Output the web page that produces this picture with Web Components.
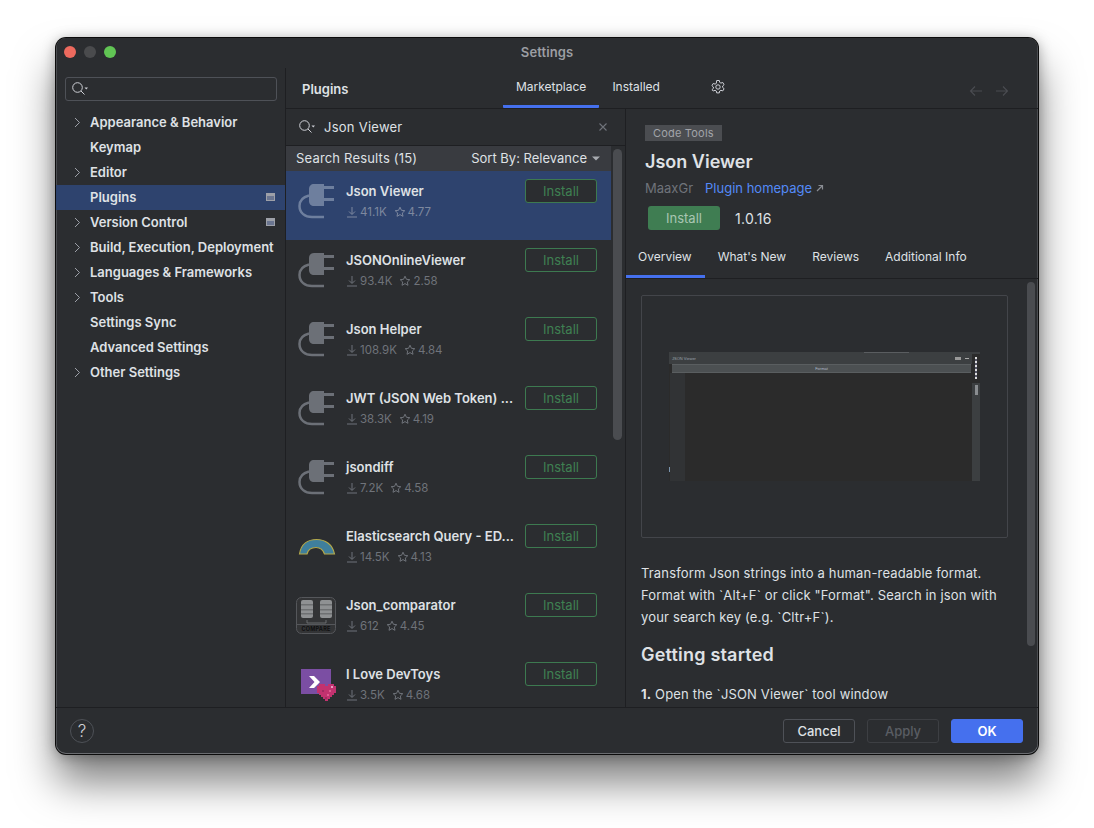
<!DOCTYPE html>
<html lang="en"><head><meta charset="utf-8"><title>Settings</title>
<style>
html,body{margin:0;background:#fff;height:828px;overflow:hidden}
body{font-family:Inter,"Liberation Sans",sans-serif;font-size:13px;color:#dfe1e5}
</style></head><body>
<settings-window>
  <side-nav slot="side">
    <nav-item arrow>Appearance &amp; Behavior</nav-item>
    <nav-item>Keymap</nav-item>
    <nav-item arrow>Editor</nav-item>
    <nav-item selected badge>Plugins</nav-item>
    <nav-item arrow badge>Version Control</nav-item>
    <nav-item arrow>Build, Execution, Deployment</nav-item>
    <nav-item arrow>Languages &amp; Frameworks</nav-item>
    <nav-item arrow>Tools</nav-item>
    <nav-item>Settings Sync</nav-item>
    <nav-item>Advanced Settings</nav-item>
    <nav-item arrow>Other Settings</nav-item>
  </side-nav>
  <plugins-header slot="header"></plugins-header>
  <plugin-list slot="list">
    <plugin-row selected name="Json Viewer" dl="41.1K" rate="4.77"><plug-icon slot="icon" tone="sel"></plug-icon></plugin-row>
    <plugin-row name="JSONOnlineViewer" dl="93.4K" rate="2.58"><plug-icon slot="icon"></plug-icon></plugin-row>
    <plugin-row name="Json Helper" dl="108.9K" rate="4.84"><plug-icon slot="icon"></plug-icon></plugin-row>
    <plugin-row name="JWT (JSON Web Token) ..." dl="38.3K" rate="4.19"><plug-icon slot="icon"></plug-icon></plugin-row>
    <plugin-row name="jsondiff" dl="7.2K" rate="4.58"><plug-icon slot="icon"></plug-icon></plugin-row>
    <plugin-row name="Elasticsearch Query - ED..." dl="14.5K" rate="4.13">
      <svg slot="icon" width="36" height="36" viewBox="0 0 36 36" style="display:block;overflow:visible"><path d="M1.500 26C3 16 10 11.500 18.500 11.500C27 11.500 34.500 16 36.500 26L26.500 26C25 21.500 22 19.500 18 19.500C14 19.500 10 21.500 9 26Z" fill="#3f7f9c" stroke="#b5a94a" stroke-width="1.200"/></svg>
    </plugin-row>
    <plugin-row name="Json_comparator" dl="612" rate="4.45">
      <svg slot="icon" width="36" height="36" viewBox="0 0 36 36" style="display:block;overflow:visible">
        <rect x="-1.500" y=".5" width="39" height="36" rx="5" fill="#333436" stroke="#55575b"/>
        <g fill="#8f9193"><rect x="3" y="3" width="12" height="18" rx="2"/><rect x="22" y="3" width="12" height="18" rx="2"/></g>
        <g fill="#6e7072"><rect x="3" y="7" width="12" height="1.500"/><rect x="3" y="12" width="12" height="1.500"/><rect x="3" y="16" width="12" height="1.500"/><rect x="22" y="7" width="12" height="1.500"/><rect x="22" y="12" width="12" height="1.500"/><rect x="22" y="16" width="12" height="1.500"/></g>
        <path d="M9 23V26H28V23" fill="none" stroke="#77797b" stroke-width=".8"/>
        <path d="M-1.500 27.500H37.500" stroke="#55575b"/>
        <text x="18" y="34" font-family="Inter,sans-serif" font-size="5.500" font-weight="700" fill="#0f0f10" text-anchor="middle" letter-spacing=".2">COMPARE</text>
      </svg>
    </plugin-row>
    <plugin-row name="I Love DevToys" dl="3.5K" rate="4.68">
      <svg slot="icon" width="40" height="36" viewBox="0 0 40 36" style="display:block;overflow:visible" shape-rendering="crispEdges">
        <rect x="3" y="3" width="30" height="25" fill="#7b4ea3"/>
        <path d="M11 10L16 10L22 16L16 22L11 22L16.500 16Z" fill="#fff" shape-rendering="auto"/>
        <path d="M21 18H27V20H30V18H36V20H38V27H36V29H34V31H32V33H30V35H27V33H25V31H23V29H21V27H19V20H21Z" fill="#c2326f"/>
        <rect x="33" y="20" width="2" height="2" fill="#e8a0c0"/><rect x="24" y="24" width="2" height="2" fill="#a02a60"/><rect x="29" y="28" width="2" height="2" fill="#e05a90"/><rect x="31" y="24" width="2" height="2" fill="#e05a90"/><rect x="27" y="31" width="2" height="2" fill="#a02a60"/>
      </svg>
    </plugin-row>
  </plugin-list>
  <plugin-detail slot="detail"></plugin-detail>
</settings-window>

<script>
function comp(tag, css, html, extra){
  class C extends HTMLElement{
    constructor(){super();const r=this.attachShadow({mode:'open'});r.innerHTML='<style>'+css+'</style>'+(typeof html==='function'?html(this):html);}
    connectedCallback(){
      if(extra)extra(this);
    }
  }
  customElements.define(tag,C);
}
const searchSvg=`<svg width="18" height="16" viewBox="0 0 18 16" style="display:block"><circle cx="6.500" cy="6.500" r="4.800" fill="none" stroke="#ced0d6" stroke-width="1"/><path d="M10 10L13.500 13.500" stroke="#ced0d6" stroke-width="1"/><path d="M13.500 6.500H17L15.250 8.500Z" fill="#ced0d6"/></svg>`;

comp('settings-window',`
:host{display:flex;flex-direction:column;box-sizing:border-box;width:982px;height:716px;margin:38px 56px;background:#2b2d30;border-radius:10px;box-shadow:inset 0 -.5px 0 .5px #6a6c70,0 0 0 1px #0c0c0c,0 28px 42px rgba(0,0,0,.5),0 2px 14px rgba(0,0,0,.35);overflow:hidden}
.title{height:30px;box-sizing:border-box;flex:none;display:grid;grid-template-columns:1fr auto 1fr;align-items:center;padding:0 8px 3px}
.lights{display:flex;gap:8px}
.lights i{width:12px;height:12px;border-radius:50%}
.t{font-weight:600;font-size:13px;color:#9c9ea3;letter-spacing:.1px}
.body{flex:1;display:flex;min-height:0}
.side{width:229px;flex:none;border-right:1px solid #1e1f22}
.main{flex:1;display:flex;flex-direction:column;min-width:0}
.cols{flex:1;display:flex;min-height:0;border-top:1px solid #1e1f22}
.left{width:339px;flex:none;border-right:1px solid #1e1f22;min-height:0;display:flex}
.right{flex:1;min-width:0;display:flex}
.foot{height:47px;box-sizing:border-box;flex:none;border-top:1px solid #1e1f22;display:flex;align-items:flex-start;padding:11px 15px 0 14px;gap:12px}
.help{box-sizing:border-box;width:24px;height:24px;border:1px solid #4e5157;border-radius:50%;display:flex;align-items:center;justify-content:center;font-size:17px;color:#ced0d6;margin-right:auto;font-weight:300}
`,`
<div class="title"><div class="lights"><i style="background:#ed6a5e"></i><i style="background:#4a4b4d"></i><i style="background:#61c554"></i></div><div class="t">Settings</div><div></div></div>
<div class="body">
  <div class="side"><slot name="side"></slot></div>
  <div class="main">
    <slot name="header"></slot>
    <div class="cols"><div class="left"><slot name="list"></slot></div><div class="right"><slot name="detail"></slot></div></div>
  </div>
</div>
<div class="foot"><div class="help">?</div><dlg-button>Cancel</dlg-button><dlg-button disabled>Apply</dlg-button><dlg-button primary>OK</dlg-button></div>
`);

comp('dlg-button',`
:host{display:flex;align-items:center;justify-content:center;box-sizing:border-box;width:72px;height:24px;border:1px solid #4e5157;border-radius:3px;font-size:13px;font-weight:500;color:#dfe1e5}
:host([disabled]){color:#5a5d63;border-color:#3d3f43}
:host([primary]){background:#4570ee;border-color:#4570ee;color:#fff;font-weight:600}
`,`<slot></slot>`);

comp('side-nav',`
:host{display:block}
.s{box-sizing:border-box;margin:9px 8px 9px 9px;height:24px;border:1px solid #4e5157;border-radius:3px;display:flex;align-items:center;padding-left:5px}
`,`<div class="s">${searchSvg}</div><slot></slot>`);

comp('nav-item',`
:host{display:flex;align-items:center;box-sizing:border-box;height:25px;padding:0 0 1px 34px;position:relative;font-weight:600;font-size:13px;color:#dfe1e5;white-space:nowrap}
:host([selected]){background:#2e436e}
.a{position:absolute;left:17px;top:7px;display:none}
:host([arrow]) .a{display:block}
.b{position:absolute;right:10px;top:8px;display:none}
:host([badge]) .b{display:block}
`,`<svg class="a" width="8" height="11" viewBox="0 0 8 11"><path d="M2 1L6.500 5.500L2 10" fill="none" stroke="#9da0a8" stroke-width="1"/></svg><slot></slot><svg class="b" width="9" height="8" viewBox="0 0 9 8"><rect x=".5" y=".5" width="8" height="7" fill="#6a7590" stroke="#9da0a8"/><rect x="1" y="1" width="7" height="2" fill="#9da0a8"/></svg>`);

comp('plugins-header',`
:host{display:flex;height:40px;flex:none;align-items:stretch;position:relative;color:#dfe1e5}
.h{width:217px;flex:none;padding:12px 0 0 16px;box-sizing:border-box;font-weight:600;font-size:13px;line-height:18px}
.tab{padding:10px 13px 0;font-size:12px;font-weight:400;line-height:18px;box-sizing:border-box;height:40px}
.tab.on{border-bottom:3px solid #4570ee;border-radius:0 0 1px 1px}
.gear{margin:11px 0 0 37px;width:16px;height:16px}
.nav{margin-left:auto;padding:17px 29px 0 0;display:flex;gap:12px}
`,`<div class="h">Plugins</div><div class="tab on">Marketplace</div><div class="tab">Installed</div>
<svg class="gear" viewBox="0 0 16 16" fill="none" stroke="#ced0d6" stroke-width="1"><circle cx="8" cy="8" r="2.200"/><path d="M6.700 1.500h2.600l.4 1.900 1.200.7 1.900-.6 1.300 2.200-1.500 1.300v1.400l1.500 1.300-1.300 2.200-1.900-.6-1.200.7-.4 1.900H6.700l-.4-1.900-1.200-.7-1.900.6L1.900 10.700l1.500-1.300V8l-1.500-1.300 1.300-2.200 1.900.6 1.200-.7z"/></svg>
<div class="nav"><svg width="14" height="12" viewBox="0 0 14 12" fill="none" stroke="#4a4c51" stroke-width="1.100"><path d="M13 6H1.500M6 1.500L1.500 6L6 10.500"/></svg><svg width="14" height="12" viewBox="0 0 14 12" fill="none" stroke="#4a4c51" stroke-width="1.100"><path d="M1 6H12.500M8 1.500L12.500 6L8 10.500"/></svg></div>`);

comp('plugin-list',`
:host{display:flex;flex-direction:column;width:100%;position:relative;min-height:0;overflow:hidden}
.s{height:37px;box-sizing:border-box;flex:none;border-bottom:1px solid #1e1f22;display:flex;align-items:center;padding:0 17px 1px 12px;color:#dfe1e5;font-size:13px;font-weight:400}
.s span{margin-left:8px;flex:1;letter-spacing:.25px}
.bar{width:325px;box-sizing:border-box;height:25px;flex:none;background:#393b40;display:flex;align-items:center;justify-content:space-between;padding:0 11px 1px 10px;color:#dfe1e5;font-size:13px}
.bar>span:first-child{letter-spacing:.18px}
.sort{display:flex;align-items:center;gap:5px}
.rows{flex:1;min-height:0;overflow:hidden;width:325px}
.thumb{position:absolute;left:327px;top:40px;width:9px;height:291px;border-radius:5px;background:#4a4c50}
`,`<div class="s">${searchSvg}<span>Json Viewer</span><svg width="10" height="10" viewBox="0 0 10 10"><path d="M1.500 1.500L8.500 8.500M8.500 1.500L1.500 8.500" stroke="#6f737a" stroke-width="1.100"/></svg></div>
<div class="bar"><span>Search Results (15)</span><span class="sort">Sort By: Relevance<svg width="8" height="5" viewBox="0 0 8 5"><path d="M0 .5H8L4 4.500Z" fill="#a8abb0"/></svg></span></div>
<div class="rows"><slot></slot></div><div class="thumb"></div>`);

const dlIcon=`<svg width="12" height="12" viewBox="0 0 12 12" fill="none" stroke="currentColor" stroke-width="1"><path d="M6 1V8M3 5.500L6 8.500L9 5.500M1 11H11"/></svg>`;
const starIcon=`<svg width="12" height="12" viewBox="0 0 12 12" fill="none" stroke="currentColor" stroke-width="1"><path d="M6 1.200L7.450 4.300L10.800 4.700L8.300 7L9 10.300L6 8.600L3 10.300L3.700 7L1.200 4.700L4.550 4.300Z"/></svg>`;

comp('plugin-row',`
:host{display:flex;height:69px;box-sizing:border-box;padding:8px 14px 0 12px;gap:12px}
:host([selected]){background:#2e436e}
.ic{width:36px;height:36px;flex:none;margin-top:4px}
.tx{flex:1;min-width:0;padding-top:3px}
.n{font-weight:600;font-size:13px;line-height:18px;color:#dfe1e5;white-space:nowrap}
.st{display:flex;align-items:center;height:16px;margin-top:4px;color:#6f737a;font-size:11.500px;line-height:16px}
:host([selected]) .st{color:#7d889f}
.st b{font-weight:400;margin:0 7px 0 2px}
.st b:last-child{margin-right:0}
.ins{width:72px;height:24px;flex:none;box-sizing:border-box;border:1px solid #3d7a50;border-radius:3px;display:flex;align-items:center;justify-content:center;color:#3f8052;font-size:13px}
:host([selected]) .ins{background:#2b2d30}
`,(h)=>`<div class="ic"><slot name="icon"></slot></div><div class="tx"><div class="n"></div><div class="st">${dlIcon}<b class="d"></b>${starIcon}<b class="r"></b></div></div><div class="ins">Install</div>`,
(h)=>{const r=h.shadowRoot;r.querySelector('.n').textContent=h.getAttribute('name');r.querySelector('.d').textContent=h.getAttribute('dl');r.querySelector('.r').textContent=h.getAttribute('rate');});

comp('plug-icon',`
:host{display:block;width:36px;height:36px;color:#6c7077}
:host([tone=sel]){color:#6e7f9e}
svg{display:block}
`,`<svg width="36" height="36" viewBox="0 0 36 36"><path d="M26 1V23H16C13 23 11 21 11 18V6C11 3 13 1 16 1Z" fill="currentColor"/><path d="M26 3H36V6H26ZM26 15H36V18H26Z" fill="currentColor"/><path d="M11 12.500C5 14 1.500 18 1.500 23C1.500 30 7 34 14 34H26" fill="none" stroke="currentColor" stroke-width="2.500"/></svg>`);

comp('plugin-detail',`
:host{display:flex;flex-direction:column;width:100%;position:relative;min-height:0;overflow:hidden;color:#dfe1e5}
.head{flex:none;padding:16px 0 0 19px}
.badge{display:inline-block;height:16px;line-height:16px;padding:0 8px;background:#4b4d51;color:#a2a4a9;font-size:11px;letter-spacing:.2px;vertical-align:top}
h1{margin:9px 0 0;font-size:18px;font-weight:600;line-height:24px;color:#dfe1e5}
.by{display:flex;align-items:center;height:18px;margin-top:5px;font-size:13px;color:#6f737a}
.by a{color:#548af7;margin-left:12px}
.by svg{margin-left:4px}
.act{display:flex;align-items:center;margin:9px 0 0 3px;height:24px}
.inst{width:72px;height:24px;background:#3f7d52;color:#a9c6b2;border-radius:3px;display:flex;align-items:center;justify-content:center;font-size:13px}
.ver{margin-left:15px;font-size:14px;letter-spacing:.3px}
.tabs{flex:none;display:flex;height:41px;box-sizing:border-box;border-bottom:1px solid #1e1f22;margin-top:8px;font-size:12px;font-weight:400}
.tabs div{padding:10px 13px 0;line-height:18px;box-sizing:border-box}
.tabs .on{border-bottom:3px solid #4570ee;height:40px;padding-left:12px;padding-right:13px}
.scroll{flex:1;min-height:0;overflow:hidden;padding:16px 0 0 15px}
.frame{box-sizing:border-box;width:367px;height:243px;border:1px solid #43454a;border-radius:2px;display:flex;align-items:center;justify-content:center}
p{margin:24px 0 0;width:375px;font-size:13px;line-height:22px;letter-spacing:.16px}
h2{margin:15px 0 0;font-size:18px;font-weight:600;line-height:24px;letter-spacing:.2px}
.s1{margin-top:16px}
.s1 b{font-weight:700}
.thumb{position:absolute;left:401px;top:173px;width:8px;height:364px;border-radius:4px;background:#4a4c50}
`,`<div class="head"><span class="badge">Code Tools</span><h1>Json Viewer</h1>
<div class="by">MaaxGr<a>Plugin homepage</a><svg width="8" height="8" viewBox="0 0 8 8"><path d="M1 7L6 2M2.500 1.500H6.500V5.500" fill="none" stroke="#8a8d93" stroke-width="1.200"/></svg></div>
<div class="act"><div class="inst">Install</div><div class="ver">1.0.16</div></div></div>
<div class="tabs"><div class="on">Overview</div><div>What's New</div><div>Reviews</div><div>Additional Info</div></div>
<div class="scroll"><div class="frame"><mini-shot></mini-shot></div>
<p>Transform Json strings into a human-readable format. Format with \`Alt+F\` or click "Format". Search in json with your search key (e.g. \`Cltr+F\`).</p>
<h2>Getting started</h2>
<p class="s1"><b>1.</b> Open the \`JSON Viewer\` tool window</p></div>
<div class="thumb"></div>`);

comp('mini-shot',`
:host{display:flex;flex-direction:column;width:311px;height:129px;background:#2b2b2b;position:relative;overflow:hidden;font-family:"Liberation Sans",sans-serif}
.top{height:12px;flex:none;background:#3c3f41;display:flex;align-items:center;padding:0 3px 0 3px;font-size:4px;color:#9aa3ad;margin-right:8px;justify-content:space-between}
.top i{width:4px;height:1px;background:#aaa;display:block;box-shadow:-9px 0 0 1px #999}
.fmt{height:9px;flex:none;background:#4c5052;margin:0 9px 0 3px;border-top:1px solid #5a5e60;border-bottom:1px solid #5a5e60;box-sizing:border-box;display:flex;align-items:center;justify-content:center;font-size:4px;color:#b0bcc8}
.low{flex:1;display:flex;min-height:0}
.g{width:15px;background:#313335;margin-left:1px}
.r{position:absolute;right:0;top:0;bottom:0;width:8px;background:#3c3f41}
.r::before{content:"";position:absolute;left:0;right:0;top:2px;height:29px;background:#2b2b2b}
.r::after{content:"";position:absolute;left:3px;width:3px;top:33px;height:10px;background:#8a8d90}
.ln{position:absolute;left:195px;top:0;width:45px;height:1px;background:#5a5d60}
.tick{position:absolute;left:0;top:115px;width:1px;height:5px;background:#7a94ad}
.r2{position:absolute;right:3px;top:5px;width:2px;height:22px;background:repeating-linear-gradient(#ddd 0 2px,#556 2px 4px)}
`,`<div class="top"><span>JSON Viewer</span><i></i></div><div class="fmt">Format</div><div class="low"><div class="g"></div></div><div class="r"></div><div class="r2"></div><div class="ln"></div><div class="tick"></div>`);
</script>
</body></html>
